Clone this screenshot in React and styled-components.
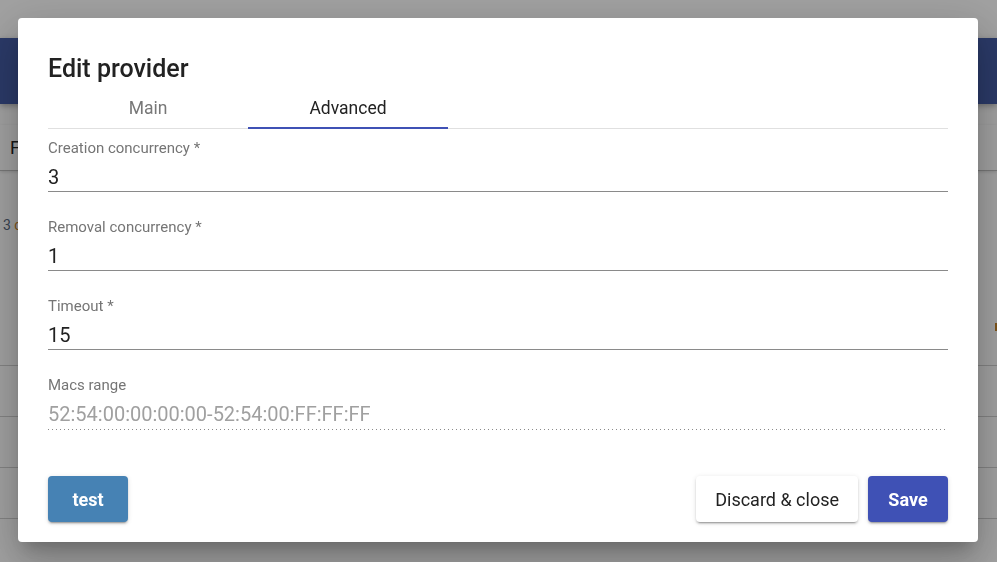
import React from 'react';
import styled, { createGlobalStyle } from 'styled-components';

const GlobalStyle = createGlobalStyle`
  html, body {
    margin: 0;
    padding: 0;
    background: #fff;
    overflow: hidden;
    font-family: Roboto, "Liberation Sans", sans-serif;
  }
`

const Page = styled.div`
  width: 997px;
  height: 562px;
  display: flex;
  flex-direction: column;
  overflow: hidden;
`

const TopStrip = styled.div`
  height: 38px;
  background: #fff;
`

const AppBar = styled.header`
  height: 66px;
  background: #445ca5;
  box-shadow: 0 2px 6px rgba(0,0,0,0.3);
`

const FilterBar = styled.div`
  margin-top: 21px;
  height: 45px;
  display: flex;
  align-items: center;
  padding-left: 10px;
  font-size: 18px;
  color: #222;
  border-bottom: 1px solid #bdbdbd;
  box-shadow: 0 1px 3px rgba(0,0,0,0.15);
`

const Caption = styled.div`
  margin-top: 46px;
  padding-left: 3px;
  font-size: 14px;
  color: #5a6a80;
  span { color: #c8862a; }
`

const TableHead = styled.div`
  height: 133px;
  box-sizing: border-box;
  display: flex;
  align-items: flex-end;
  justify-content: flex-end;
  padding-bottom: 34px;
  border-bottom: 1px solid #d0d0d0;
`

const Badge = styled.span`
  display: inline-block;
  width: 2px;
  height: 8px;
  background: #c8862a;
`

const TableRow = styled.div`
  height: 51px;
  box-sizing: border-box;
  border-bottom: 1px solid #d0d0d0;
`

const Overlay = styled.div`
  position: fixed;
  inset: 0;
  background: rgba(0,0,0,0.37);
  display: flex;
  justify-content: flex-start;
  align-items: flex-start;
  padding: 18px 0 0 18px;
`

const Dialog = styled.div`
  width: 960px;
  height: 524px;
  box-sizing: border-box;
  background: #fff;
  border-radius: 4px;
  padding: 30px 30px 20px;
  display: flex;
  flex-direction: column;
  box-shadow: 0 11px 15px -7px rgba(0,0,0,0.2), 0 24px 38px 3px rgba(0,0,0,0.14), 0 9px 46px 8px rgba(0,0,0,0.12);
`

const Title = styled.h2`
  margin: 0;
  font-size: 25px;
  line-height: 41px;
  font-weight: 500;
  color: #222;
`

const TabBar = styled.div`
  display: flex;
  height: 40px;
  box-shadow: inset 0 -1px 0 #e0e0e0;
`

const Tab = styled.div`
  width: 200px;
  box-sizing: border-box;
  display: flex;
  align-items: center;
  justify-content: center;
  font-size: 17.5px;
  color: ${p => (p.$active ? '#222' : '#777')};
  border-bottom: 2px solid ${p => (p.$active ? '#3f51b5' : 'transparent')};
`

const Fields = styled.div`
  display: flex;
  flex-direction: column;
  gap: 25px;
  padding-top: 9px;
`

const Field = styled.div`
  display: flex;
  flex-direction: column;
  gap: 5px;
`

const Label = styled.label`
  font-size: 15px;
  line-height: 20px;
  color: #757575;
`

const Value = styled.div`
  height: 28px;
  line-height: 28px;
  font-size: 20px;
  color: ${p => (p.$disabled ? '#a0a0a0' : '#222')};
  ${p => p.$disabled
    ? `padding-bottom: 2px;
       background-image: linear-gradient(to right, #8a8a8a 1px, transparent 1px);
       background-size: 4px 1px;
       background-repeat: repeat-x;
       background-position: left bottom;`
    : `border-bottom: 1px solid #8a8a8a;`}
`

const Actions = styled.div`
  margin-top: auto;
  display: flex;
  align-items: center;
  gap: 10px;
`

const Spacer = styled.div`
  flex: 1;
`

const Button = styled.button`
  height: 46px;
  min-width: 80px;
  padding: 0 19px;
  border: none;
  border-radius: 4px;
  font-family: Roboto, "Liberation Sans", sans-serif;
  font-size: 18px;
  font-weight: ${p => (p.$variant === 'plain' ? 400 : 700)};
  color: ${p => (p.$variant === 'plain' ? '#222' : '#fff')};
  background: ${p => p.$variant === 'test' ? '#4682b4' : p.$variant === 'save' ? '#3f51b5' : '#fff'};
  box-shadow: 0 3px 1px -2px rgba(0,0,0,0.2), 0 2px 2px 0 rgba(0,0,0,0.14), 0 1px 5px 0 rgba(0,0,0,0.12);
  cursor: pointer;
`

const fields = [
  { label: 'Creation concurrency *', value: '3' },
  { label: 'Removal concurrency *', value: '1' },
  { label: 'Timeout *', value: '15' },
  { label: 'Macs range', value: '52:54:00:00:00:00-52:54:00:FF:FF:FF', disabled: true },
]

const App = () => {
  return (
    <>
      <GlobalStyle />
      <Page>
        <TopStrip />
        <AppBar />
        <FilterBar>Filter</FilterBar>
        <Caption>3 <span>c</span></Caption>
        <TableHead><Badge /></TableHead>
        <TableRow />
        <TableRow />
        <TableRow />
      </Page>
      <Overlay>
        <Dialog>
          <Title>Edit provider</Title>
          <TabBar>
            <Tab>Main</Tab>
            <Tab $active>Advanced</Tab>
          </TabBar>
          <Fields>
            {fields.map(f => (
              <Field key={f.label}>
                <Label>{f.label}</Label>
                <Value $disabled={f.disabled}>{f.value}</Value>
              </Field>
            ))}
          </Fields>
          <Actions>
            <Button $variant="test">test</Button>
            <Spacer />
            <Button $variant="plain">Discard &amp; close</Button>
            <Button $variant="save">Save</Button>
          </Actions>
        </Dialog>
      </Overlay>
    </>
  )
}

export default App;
